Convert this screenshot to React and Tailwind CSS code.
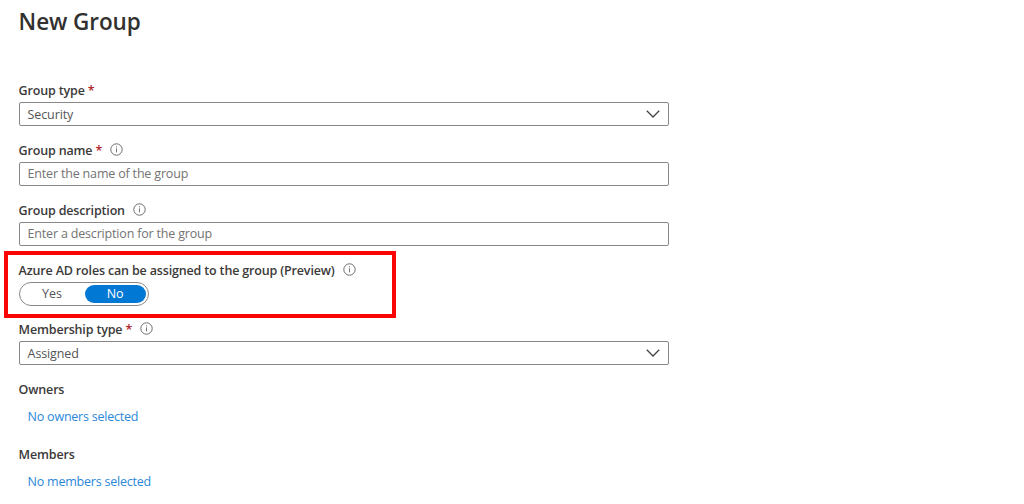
import React, { useState } from 'react';

const InfoIcon = () => (
  <svg width="13" height="13" viewBox="0 0 13 13" fill="none" className="shrink-0">
    <circle cx="6.5" cy="6.5" r="5.7" stroke="#666" strokeWidth="0.95" />
    <path d="M6.5 5.4v4" stroke="#666" strokeWidth="0.9" />
    <circle cx="6.5" cy="3.8" r="0.6" fill="#666" />
  </svg>
);

const ChevronIcon = () => (
  <svg width="14" height="8" viewBox="0 0 14 8" fill="none" className="shrink-0">
    <path d="M0.8 0.8L7 7L13.2 0.8" stroke="#444" strokeWidth="1.3" />
  </svg>
);

const Label = ({ children, required, info }) => (
  <div className="flex h-6 items-center text-[12.5px] font-semibold tracking-[-0.16px] text-[#3b3a39]">
    <span className="pt-0.5">{children}</span>
    {required && <span className="ml-[3px] pt-0.5 text-[#b02a2e]">*</span>}
    {info && (
      <span className="ml-2 flex pb-px">
        <InfoIcon />
      </span>
    )}
  </div>
);

const boxClass = 'flex h-6 w-[650px] items-center rounded-[2px] border border-[#8a8886] bg-white pl-2 pr-2 text-[12.5px]';

const SelectBox = ({ value }) => (
  <button type="button" className={`${boxClass} justify-between tracking-[-0.12px] text-[#555]`}>
    <span className="pt-0.5">{value}</span>
    <ChevronIcon />
  </button>
);

const TextBox = ({ placeholder }) => (
  <input type="text" placeholder={placeholder} className={`${boxClass} pb-0.5 tracking-[-0.18px] text-[#444] outline-none placeholder:text-[#737373]`} />
);

export default function App() {
  const [assignable, setAssignable] = useState(false);

  return (
    <div className="h-[504px] overflow-hidden bg-white pl-[18.6px] font-['Open_Sans','Noto_Sans',sans-serif]">
      <h1 className="pt-[7px] text-[22.5px] leading-[30px] font-semibold tracking-[-0.08px] text-[#323130]">New Group</h1>

      <div className="mt-[41px] flex flex-col gap-3">
        <div>
          <Label required>Group type</Label>
          <SelectBox value="Security" />
        </div>
        <div>
          <Label required info>Group name</Label>
          <TextBox placeholder="Enter the name of the group" />
        </div>
        <div>
          <Label info>Group description</Label>
          <TextBox placeholder="Enter a description for the group" />
        </div>
        <div className="relative">
          {/* Callout frame around the role assignment setting */}
          <div className="pointer-events-none absolute -top-[7px] -left-[15px] h-[67px] w-[392px] border-4 border-[#f90505]" />
          <Label info>Azure AD roles can be assigned to the group (Preview)</Label>
          <div className="flex h-6 w-[130px] items-center justify-between rounded-full border border-[#8a8886] px-0.5 text-[12.5px]">
            <button
              type="button"
              onClick={() => setAssignable(true)}
              className={`h-[18px] w-[61px] rounded-full leading-[18px] ${assignable ? 'bg-[#0078d4] text-white' : 'text-[#555]'}`}
            >
              Yes
            </button>
            <button
              type="button"
              onClick={() => setAssignable(false)}
              className={`h-[18px] w-[61px] rounded-full leading-[18px] ${assignable ? 'text-[#555]' : 'bg-[#0078d4] text-white'}`}
            >
              No
            </button>
          </div>
        </div>
        <div className="-mt-px">
          <Label required info>Membership type</Label>
          <SelectBox value="Assigned" />
        </div>
      </div>

      <div className="mt-3">
        <Label>Owners</Label>
        <a href="#" className="ml-[9px] mt-1 block text-[12.5px] leading-6 tracking-[-0.22px] text-[#2b88d8]">No owners selected</a>
      </div>
      <div className="mt-[13px]">
        <Label>Members</Label>
        <a href="#" className="ml-[9px] mt-1 block text-[12.5px] leading-6 tracking-[-0.22px] text-[#2b88d8]">No members selected</a>
      </div>
    </div>
  );
}
